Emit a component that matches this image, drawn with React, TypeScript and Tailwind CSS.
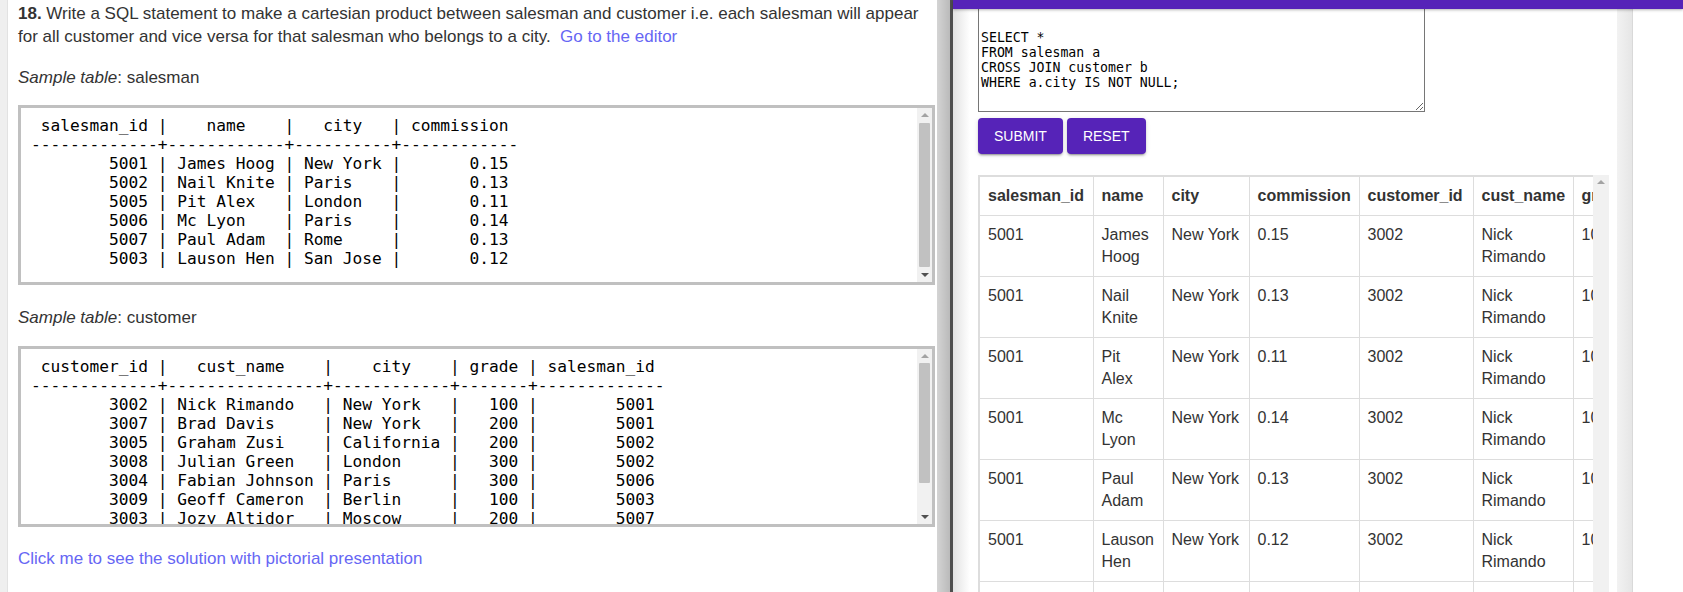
import React from 'react';

const salesmanText = ` salesman_id |    name    |   city   | commission
-------------+------------+----------+------------
        5001 | James Hoog | New York |       0.15
        5002 | Nail Knite | Paris    |       0.13
        5005 | Pit Alex   | London   |       0.11
        5006 | Mc Lyon    | Paris    |       0.14
        5007 | Paul Adam  | Rome     |       0.13
        5003 | Lauson Hen | San Jose |       0.12
`;

const customerText = ` customer_id |   cust_name    |    city    | grade | salesman_id
-------------+----------------+------------+-------+-------------
        3002 | Nick Rimando   | New York   |   100 |        5001
        3007 | Brad Davis     | New York   |   200 |        5001
        3005 | Graham Zusi    | California |   200 |        5002
        3008 | Julian Green   | London     |   300 |        5002
        3004 | Fabian Johnson | Paris      |   300 |        5006
        3009 | Geoff Cameron  | Berlin     |   100 |        5003
        3003 | Jozy Altidor   | Moscow     |   200 |        5007
        3001 | Brad Guzan     | London     |       |        5005
`;

const sql = `SELECT *
FROM salesman a
CROSS JOIN customer b
WHERE a.city IS NOT NULL;`;

const salesmen: [string, string][] = [
  ['James Hoog', '0.15'],
  ['Nail Knite', '0.13'],
  ['Pit Alex', '0.11'],
  ['Mc Lyon', '0.14'],
  ['Paul Adam', '0.13'],
  ['Lauson Hen', '0.12'],
  ['James Hoog', '0.15'],
];

const headers = ['salesman_id', 'name', 'city', 'commission', 'customer_id', 'cust_name', 'grade', 'salesman_id'];
const widths = ['w-[114px]', 'w-[70px]', 'w-[86px]', 'w-[110px]', 'w-[114px]', 'w-[100px]', 'w-[61px]', 'w-[114px]'];

const FakeScroll: React.FC<{ thumb: string; gap: string }> = ({ thumb, gap }) => (
  <div className="flex w-[15px] shrink-0 flex-col bg-[#f1f1f1]">
    <div className="flex h-[14px] items-center justify-center">
      <div className="h-0 w-0 border-x-[4px] border-b-[4px] border-x-transparent border-b-[#a3a3a3]" />
    </div>
    <div className={`mx-[2px] rounded-[1px] bg-[#c1c1c1] ${gap} ${thumb}`} />
    <div className="flex-1" />
    <div className="flex h-[14px] items-center justify-center">
      <div className="h-0 w-0 border-x-[4px] border-t-[4px] border-x-transparent border-t-[#505050]" />
    </div>
  </div>
);

const SampleBox: React.FC<{ text: string; height: string; thumb: string; gap: string }> = ({ text, height, thumb, gap }) => (
  <div className={`flex border-[3px] border-[#c0c0c0] ${height}`}>
    <div className="flex-1 overflow-hidden pl-[10px] pt-[8px]">
      <pre className="font-['DejaVu_Sans_Mono',monospace] text-[16.2px] leading-[19px] text-black">{text}</pre>
    </div>
    <FakeScroll thumb={thumb} gap={gap} />
  </div>
);

export default function App() {
  return (
    <div className="flex h-[592px] w-[1683px] overflow-hidden bg-white font-['Liberation_Sans',Arial,sans-serif]">
      {/* question side */}
      <div className="flex w-[937px] shrink-0">
        <div className="w-[8px] shrink-0 border-r border-[#e2e2e2] bg-[#efefef]" />
        <div className="flex-1 pl-[10px] pr-[2px] pt-[2px] text-[17px] leading-[23px] text-[#333]">
          <p>
            <b>18.</b> Write a SQL statement to make a cartesian product between salesman and customer i.e. each salesman
            will appear for all customer and vice versa for that salesman who belongs to a city.{'\u00a0\u00a0'}
            <a className="text-[#6666f4]">Go to the editor</a>
          </p>
          <p className="mt-[18px]">
            <i>Sample table</i>: salesman
          </p>
          <div className="mt-[16px]">
            <SampleBox text={salesmanText} height="h-[180px]" thumb="h-[144px]" gap="mt-[1px]" />
          </div>
          <p className="mt-[21px]">
            <i>Sample table</i>: customer
          </p>
          <div className="mt-[17px]">
            <SampleBox text={customerText} height="h-[181px]" thumb="h-[120px]" gap="mt-0" />
          </div>
          <p className="mt-[20px]">
            <a className="text-[#6666f4]">Click me to see the solution with pictorial presentation</a>
          </p>
        </div>
      </div>

      {/* divider */}
      <div className="w-[13px] shrink-0 bg-linear-to-r from-[#d4d4d4] to-[#bababa]" />
      <div className="w-[3px] shrink-0 bg-[#4e4e4e]" />

      {/* editor side */}
      <div className="flex min-w-0 flex-1 flex-col">
        <div className="relative z-10 h-[9px] shrink-0 bg-[#5623b8] shadow-[0_1px_3px_rgba(0,0,0,0.3)]" />
        <div className="flex min-h-0 flex-1">
          <div className="w-[17px] shrink-0 bg-linear-to-r from-[#e2e2e2] to-white" />
          <div className="flex w-[647px] shrink-0 flex-col pl-[8px]">
            <textarea
              readOnly
              defaultValue={sql}
              className="h-[103px] w-[447px] shrink-0 border border-t-0 border-[#767676] pl-[2px] pt-[21px] font-['DejaVu_Sans_Mono',monospace] text-[13.2px] leading-[15px] text-black outline-none"
            />
            <div className="mt-[6px] flex gap-[4px]">
              <button className="h-[36px] rounded-[4px] bg-[#5623b8] px-[16px] text-[14px] text-white shadow-[0_3px_1px_-2px_rgba(0,0,0,0.2),0_2px_2px_0_rgba(0,0,0,0.14),0_1px_5px_0_rgba(0,0,0,0.12)]">
                SUBMIT
              </button>
              <button className="h-[36px] rounded-[4px] bg-[#5623b8] px-[16px] text-[14px] text-white shadow-[0_3px_1px_-2px_rgba(0,0,0,0.2),0_2px_2px_0_rgba(0,0,0,0.14),0_1px_5px_0_rgba(0,0,0,0.12)]">
                RESET
              </button>
            </div>
            <div className="mt-[21px] flex w-[631px]">
              <div className="w-[615px] overflow-hidden">
                <table className="w-[769px] table-fixed border-collapse border-2 border-[#ddd] text-[16px] leading-[22px] text-[#333]">
                  <thead>
                    <tr>
                      {headers.map((h, i) => (
                        <th key={i} className={`border border-[#ddd] p-[8px] text-left font-bold ${widths[i]}`}>
                          {h}
                        </th>
                      ))}
                    </tr>
                  </thead>
                  <tbody>
                    {salesmen.map(([name, comm], i) => (
                      <tr key={i}>
                        {['5001', name, 'New York', comm, '3002', 'Nick Rimando', '100', '5001'].map((c, j) => (
                          <td key={j} className="border border-[#ddd] p-[8px] align-top">
                            {c}
                          </td>
                        ))}
                      </tr>
                    ))}
                  </tbody>
                </table>
              </div>
              <div className="flex w-[16px] shrink-0 flex-col items-center bg-[#f1f1f1]">
                <div className="mt-[5px] h-0 w-0 border-x-[4px] border-b-[4px] border-x-transparent border-b-[#a3a3a3]" />
              </div>
            </div>
          </div>
          <div className="w-[16px] shrink-0 border-r border-[#d9d9d9] bg-linear-to-r from-[#f2f2f2] to-[#e6e6e6]" />
          <div className="flex-1" />
        </div>
      </div>
    </div>
  );
}
